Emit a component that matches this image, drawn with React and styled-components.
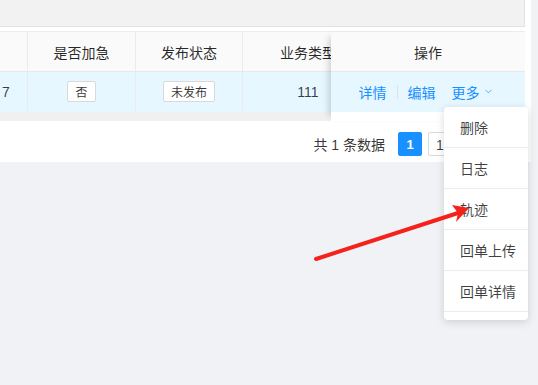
import React from 'react';
import styled, { createGlobalStyle } from 'styled-components';
import { ChevronDown } from 'lucide-react';

const GlobalStyle = createGlobalStyle`
  html, body {
    margin: 0;
    padding: 0;
    background: #f0f2f5;
    font-family: 'Liberation Sans', 'Noto Sans CJK SC', sans-serif;
    font-size: 14px;
    color: rgba(0, 0, 0, 0.85);
  }
  * { box-sizing: border-box; }
`;

// --- Layout ---

const Page = styled.div`
  position: relative;
  width: 538px;
  height: 385px;
  overflow: hidden;
`;

const Card = styled.div`
  position: relative;
  width: 531px;
  background: #fff;
`;

const FilterStrip = styled.div`
  width: 525px;
  height: 27px;
  background: #f2f2f2;
  border-bottom: 1px solid #e2e2e2;
  border-right: 1px solid #e2e2e2;
`;

const TableWrap = styled.div`
  display: flex;
  width: 525px;
  margin-top: 4px;
  border-top: 1px solid #ededed;
`;

const ScrollPart = styled.div`
  width: 331px;
  overflow: hidden;
`;

const FixedPart = styled.div`
  position: relative;
  width: 194px;
  box-shadow: -7px 0 7px -5px rgba(0, 0, 0, 0.18);
`;

const Row = styled.div`
  display: grid;
  grid-template-columns: 28px 108px 107px 130px;
  width: 373px;
  height: 40px;
  background: ${p => (p.$head ? '#fafafa' : '#e6f7ff')};
  border-bottom: 1px solid ${p => (p.$head ? '#e8e8e8' : '#e6f7ff')};
`;

const Cell = styled.div`
  display: flex;
  align-items: center;
  justify-content: ${p => p.$align || 'center'};
  padding: 0 ${p => p.$pad || 0}px;
  white-space: nowrap;
  overflow: hidden;
  border-right: ${p => (p.$edge ? '1px solid #ebebeb' : 'none')};
  color: ${p => (p.$head ? 'rgba(0,0,0,0.85)' : 'rgba(0,0,0,0.75)')};
`;

const FixedCell = styled.div`
  display: flex;
  align-items: center;
  justify-content: center;
  height: 40px;
  background: ${p => (p.$head ? '#fafafa' : '#e6f7ff')};
  border-bottom: 1px solid ${p => (p.$head ? '#e8e8e8' : '#e6f7ff')};
  padding-right: ${p => (p.$head ? 0 : 4)}px;
`;

const ScrollBar = styled.div`
  height: 9px;
  background: ${p => (p.$fixed ? '#fff' : '#f0f0f0')};
`;

const Tag = styled.span`
  display: inline-flex;
  align-items: center;
  height: 21px;
  padding: 0 7px;
  font-size: 12px;
  background: #fff;
  border: 1px solid #d9d9d9;
  border-radius: 2px;
  color: rgba(0, 0, 0, 0.8);
`;

const Link = styled.a`
  display: inline-flex;
  align-items: center;
  color: #1890ff;
  cursor: pointer;
  margin-left: ${p => p.$gap || 0}px;
`;

const Divider = styled.span`
  display: inline-block;
  width: 1px;
  height: 14px;
  background: #d6e4f0;
  margin: 0 10px;
`;

const Pager = styled.div`
  display: flex;
  align-items: center;
  justify-content: flex-end;
  gap: 6px;
  padding: 11px 13px 6px 0;
`;

const Total = styled.span`
  margin-right: 7px;
  color: rgba(0, 0, 0, 0.8);
`;

const PageBtn = styled.span`
  display: inline-flex;
  align-items: center;
  justify-content: center;
  width: 24px;
  height: 24px;
  border-radius: 2px;
  font-weight: bold;
  font-size: 13px;
  background: ${p => (p.$active ? '#1890ff' : '#fff')};
  color: ${p => (p.$active ? '#fff' : 'rgba(0,0,0,0.75)')};
  border: 1px solid ${p => (p.$active ? '#1890ff' : '#d9d9d9')};
`;

const SizeSelect = styled.span`
  display: inline-flex;
  align-items: center;
  width: 90px;
  height: 24px;
  padding: 0 7px;
  border: 1px solid #d9d9d9;
  border-radius: 2px;
  color: rgba(0, 0, 0, 0.75);
`;

const Menu = styled.ul`
  position: absolute;
  left: 444px;
  top: 107px;
  width: 84px;
  margin: 0;
  padding: 0 0 8px;
  list-style: none;
  background: #fff;
  border-radius: 4px;
  box-shadow: 0 2px 8px rgba(0, 0, 0, 0.15);
  z-index: 10;
`;

const MenuItem = styled.li`
  height: 41px;
  padding-left: 16px;
  display: flex;
  align-items: center;
  border-bottom: 1px solid #ececec;
  color: rgba(0, 0, 0, 0.75);
  white-space: nowrap;
`;

const Arrow = styled.svg`
  position: absolute;
  left: 0;
  top: 0;
  z-index: 20;
  pointer-events: none;
`;

const menu = ['删除', '日志', '轨迹', '回单上传', '回单详情'];

export default function App() {
  return (
    <Page>
      <GlobalStyle />
      <Card>
        <FilterStrip />
        <TableWrap>
          <ScrollPart>
            <Row $head>
              <Cell $head $edge />
              <Cell $head $edge>是否加急</Cell>
              <Cell $head $edge>发布状态</Cell>
              <Cell $head>业务类型</Cell>
            </Row>
            <Row>
              <Cell $edge $align="flex-start" $pad={2}>7</Cell>
              <Cell $edge><Tag>否</Tag></Cell>
              <Cell $edge><Tag>未发布</Tag></Cell>
              <Cell>111</Cell>
            </Row>
            <ScrollBar />
          </ScrollPart>
          <FixedPart>
            <FixedCell $head>操作</FixedCell>
            <FixedCell>
              <Link>详情</Link>
              <Divider />
              <Link>编辑</Link>
              <Link $gap={16}>
                更多
                <ChevronDown size={11} strokeWidth={1.5} style={{ marginLeft: 3 }} />
              </Link>
            </FixedCell>
            <ScrollBar $fixed />
          </FixedPart>
        </TableWrap>
        <Pager>
          <Total>共 1 条数据</Total>
          <PageBtn $active>1</PageBtn>
          <SizeSelect>10 条/页</SizeSelect>
        </Pager>
        <Menu>
          {menu.map(m => (
            <MenuItem key={m}>{m}</MenuItem>
          ))}
        </Menu>
      </Card>
      <Arrow width="538" height="385" viewBox="0 0 538 385">
        <line x1="316" y1="259" x2="458" y2="213" stroke="#f5211b" strokeWidth="4" strokeLinecap="round" />
        <polygon points="469,208 452,205 458,213 456,222" fill="#f5211b" />
      </Arrow>
    </Page>
  );
}
